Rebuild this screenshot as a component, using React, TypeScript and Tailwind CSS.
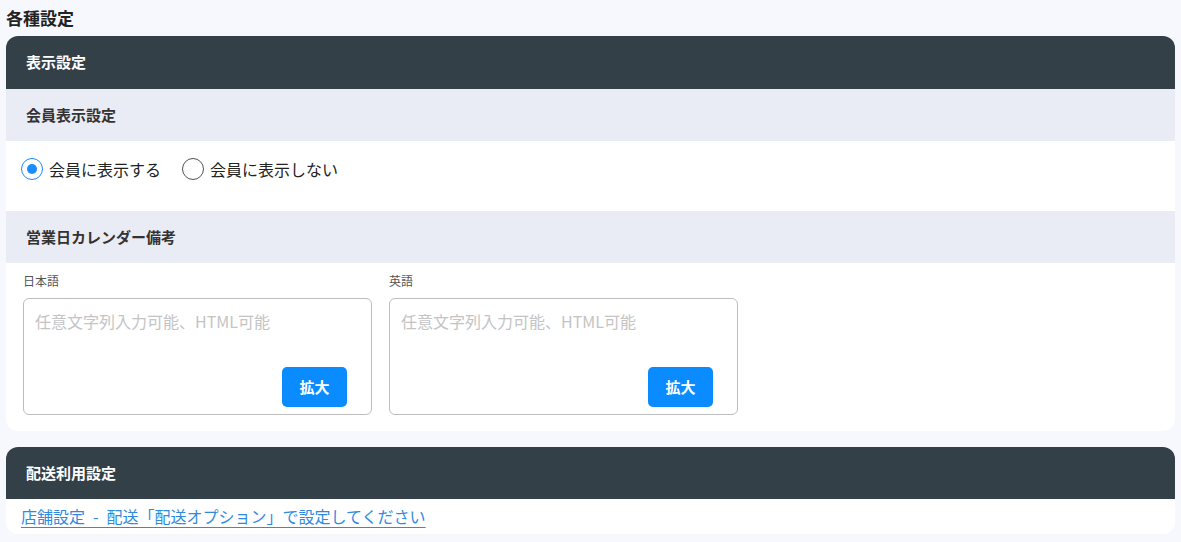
import React from 'react';

const font = { fontFamily: '"Noto Sans CJK JP", "Noto Sans", sans-serif' };

const SubHeader: React.FC<{ title: string }> = ({ title }) => (
  <div className="h-[52px] bg-[#e9ecf4] flex items-center px-5 text-[15px] font-bold text-[#333]">{title}</div>
);

const Radio: React.FC<{ checked?: boolean; label: string }> = ({ checked, label }) => (
  <label className="flex items-center gap-[6px] cursor-pointer">
    <span className={`w-[22px] h-[22px] rounded-full border flex items-center justify-center bg-white ${checked ? 'border-[#1a8cff]' : 'border-[#555]'}`}>
      {checked && <span className="w-[10px] h-[10px] rounded-full bg-[#1a8cff]" />}
    </span>
    <span className="text-[16px] text-[#222]">{label}</span>
  </label>
);

const NoteField: React.FC<{ label: string }> = ({ label }) => (
  <div className="w-[349px]">
    <div className="text-[12px] text-[#555] leading-[16px] mb-[9px]">{label}</div>
    <div className="relative h-[117px] border border-[#bdbdbd] rounded-[6px] bg-white">
      <div className="px-[11px] pt-[10px] text-[16px] text-[#c4c4c4]">任意文字列入力可能、HTML可能</div>
      <button className="absolute right-[24px] bottom-[7px] w-[65px] h-[40px] rounded-[5px] bg-[#0a8bff] text-white text-[15px] font-bold">拡大</button>
    </div>
  </div>
);

export default function App() {
  return (
    <div className="min-h-screen bg-[#f7f8fd] px-[6px] pb-[10px]" style={font}>
      <h1 className="text-[17px] font-bold text-[#222] h-[36px] flex items-center">各種設定</h1>

      <div className="bg-white rounded-[12px] overflow-hidden">
        <div className="h-[53px] bg-[#334048] flex items-center px-5 text-[15px] font-bold text-white">表示設定</div>
        <SubHeader title="会員表示設定" />
        <div className="h-[70px] flex items-start pt-[16px] px-[15px] gap-[21px]">
          <Radio checked label="会員に表示する" />
          <Radio label="会員に表示しない" />
        </div>
        <SubHeader title="営業日カレンダー備考" />
        <div className="flex gap-[17px] px-[17px] pt-[10px] pb-[16px]">
          <NoteField label="日本語" />
          <NoteField label="英語" />
        </div>
      </div>

      <div className="mt-[16px] bg-white rounded-[12px] overflow-hidden">
        <div className="h-[52px] bg-[#334048] flex items-center px-5 text-[15px] font-bold text-white">配送利用設定</div>
        <div className="px-[15px] pt-[5px] pb-[6px]">
          <a href="#" className="text-[16px] text-[#2f8ae0] underline underline-offset-[4px] decoration-[#2f8ae0]">
            {'店舗設定\u2002-\u2002配送「配送オプション」で設定してください'}
          </a>
        </div>
      </div>
    </div>
  );
}
